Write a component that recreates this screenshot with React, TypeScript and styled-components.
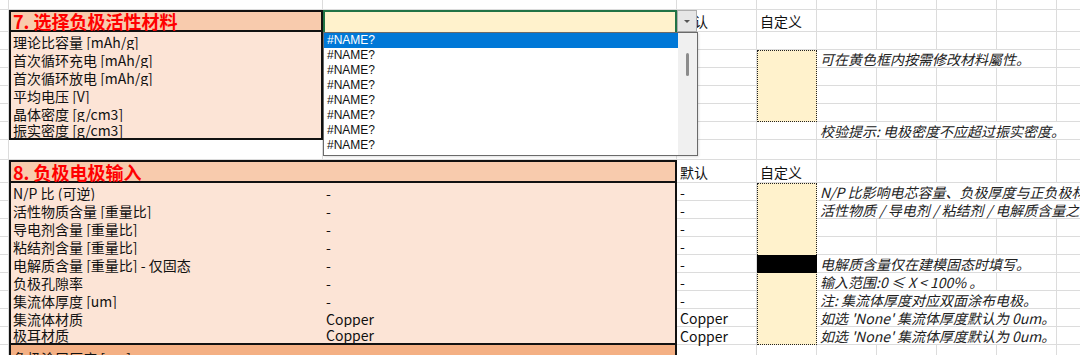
import React from 'react';
import styled, { createGlobalStyle, css } from 'styled-components';

const GlobalStyle = createGlobalStyle`
  html, body { margin: 0; padding: 0; background: #ffffff; overflow: hidden; }
  body { font-family: "Noto Sans CJK SC", "Noto Sans", sans-serif; }
  *, *::before, *::after { box-sizing: border-box; }
`;

const COLS = [9, 314, 354, 80, 60, 60, 60, 60, 60, 60];
const ROWS = [10, 22, 18, 18, 18, 18, 18, 18, 20, 23, 18, 18, 18, 18, 18, 18, 18, 18, 18, 26];

const GRID = '#dcdcdc';
const EDGE = '2px solid #111';

type Place = { $col: number; $row: number; $colSpan?: number; $rowSpan?: number };
type Edges = { $top?: boolean; $bottom?: boolean; $left?: boolean; $right?: boolean };

const place = css<Place>`
  grid-column: ${(p) => `${p.$col} / span ${p.$colSpan ?? 1}`};
  grid-row: ${(p) => `${p.$row} / span ${p.$rowSpan ?? 1}`};
`;

const edges = css<Edges>`
  border-top: ${(p) => (p.$top ? EDGE : 'none')};
  border-bottom: ${(p) => (p.$bottom ? EDGE : 'none')};
  border-left: ${(p) => (p.$left ? EDGE : 'none')};
  border-right: ${(p) => (p.$right ? EDGE : 'none')};
`;

const Sheet = styled.div`
  position: relative;
  display: grid;
  grid-template-columns: ${COLS.map((w) => `${w}px`).join(' ')};
  grid-template-rows: ${ROWS.map((h) => `${h}px`).join(' ')};
  width: 1080px;
  height: 355px;
  overflow: hidden;
  font-size: 14px;
  line-height: 15px;
  color: #111;
`;

const GridCell = styled.div<Place>`
  ${place};
  border-right: 1px solid ${GRID};
  border-bottom: 1px solid ${GRID};
  display: flex;
  align-items: center;
  padding: 2px 0 0 3px;
  white-space: nowrap;
`;

const NoteCell = styled(GridCell)`
  font-style: italic;
  color: #222;
  padding-left: 3px;
`;

const SectionHeader = styled.div<Place & Edges>`
  ${place};
  ${edges};
  background: #f8cbad;
  color: #ff0000;
  font-weight: 700;
  font-size: 18px;
  line-height: 18px;
  display: flex;
  align-items: center;
  padding-left: 2px;
  white-space: nowrap;
`;

const LabelCell = styled.div<Place & Edges>`
  ${place};
  ${edges};
  background: #fce4d6;
  display: flex;
  align-items: center;
  padding: ${(p) => (p.$bottom ? '0' : '2px')} 0 0 2px;
  white-space: nowrap;
`;

const ValueCell = styled(LabelCell)`
  padding-left: 3px;
`;

const FooterCell = styled.div<Place & Edges>`
  ${place};
  ${edges};
  background: #f4b084;
  padding: 6px 0 0 2px;
  white-space: nowrap;
`;

const SelectedCell = styled.div<Place>`
  ${place};
  background: #fff2cc;
  border: 2px solid #217346;
  border-bottom: none;
`;

const CustomBox = styled.div<Place>`
  ${place};
  background: #fff2cc;
  border: 1px dotted #222;
`;

const BlackCell = styled.div<Place>`
  ${place};
  background: #000;
`;

const DropButton = styled.div`
  position: absolute;
  left: 677px;
  top: 10px;
  width: 20px;
  height: 22px;
  background: #e6e6e6;
  border: 1px solid #adadad;
  display: flex;
  align-items: center;
  justify-content: center;
`;

const Caret = styled.span`
  width: 0;
  height: 0;
  border-left: 3px solid transparent;
  border-right: 3px solid transparent;
  border-top: 3px solid #555;
`;

const DropList = styled.div`
  position: absolute;
  left: 323px;
  top: 32px;
  width: 375px;
  height: 124px;
  background: #ffffff;
  border: 1px solid #6a6a6a;
  display: flex;
  box-shadow: 1px 1px 2px rgba(0, 0, 0, 0.12);
`;

const Options = styled.ul`
  flex: 1;
  margin: 0;
  padding: 0;
  list-style: none;
  overflow: hidden;
`;

const Option = styled.li<{ $active?: boolean }>`
  height: 15px;
  line-height: 15px;
  padding-left: 3px;
  font-family: "Liberation Sans", Arial, sans-serif;
  font-size: 12px;
  color: ${(p) => (p.$active ? '#ffffff' : '#111')};
  background: ${(p) => (p.$active ? '#0078d7' : 'transparent')};
`;

const ScrollTrack = styled.div`
  width: 19px;
  background: #f0f0f0;
  display: flex;
  justify-content: center;
`;

const ScrollThumb = styled.div`
  margin-top: 20px;
  width: 3px;
  height: 23px;
  border-radius: 2px;
  background: #8c8c8c;
`;

const sec7Labels = [
  '理论比容量 [mAh/g]',
  '首次循环充电 [mAh/g]',
  '首次循环放电 [mAh/g]',
  '平均电压 [V]',
  '晶体密度 [g/cm3]',
  '振实密度 [g/cm3]',
];

const sec8Rows = [
  { label: 'N/P 比 (可逆)', value: '-' },
  { label: '活性物质含量 [重量比]', value: '-' },
  { label: '导电剂含量 [重量比]', value: '-' },
  { label: '粘结剂含量 [重量比]', value: '-' },
  { label: '电解质含量 [重量比] - 仅固态', value: '-' },
  { label: '负极孔隙率', value: '-' },
  { label: '集流体厚度 [um]', value: '-' },
  { label: '集流体材质', value: 'Copper' },
  { label: '极耳材质', value: 'Copper' },
];

const notes = [
  { row: 4, span: 4, text: '可在黄色框内按需修改材料屬性。' },
  { row: 8, span: 5, text: '校验提示: 电极密度不应超过振实密度。' },
  { row: 11, span: 5, text: 'N/P 比影响电芯容量、负极厚度与正负极材料利用率。' },
  { row: 12, span: 5, text: '活性物质 / 导电剂 / 粘结剂 / 电解质含量之和应为 100%。' },
  { row: 15, span: 4, text: '电解质含量仅在建模固态时填写。' },
  { row: 16, span: 3, text: '输入范围:0 ≤ X < 100% 。' },
  { row: 17, span: 4, text: '注: 集流体厚度对应双面涂布电极。' },
  { row: 18, span: 4, text: "如选 'None' 集流体厚度默认为 0um。" },
  { row: 19, span: 4, text: "如选 'None' 集流体厚度默认为 0um。" },
];

type Area = { c: number; r: number; cs: number; rs: number };

export default function App() {
  const areas: Area[] = [
    { c: 2, r: 2, cs: 1, rs: 1 },
    { c: 3, r: 2, cs: 1, rs: 1 },
    { c: 4, r: 2, cs: 1, rs: 1 },
    { c: 5, r: 2, cs: 1, rs: 1 },
    { c: 2, r: 3, cs: 2, rs: 6 },
    { c: 5, r: 4, cs: 1, rs: 4 },
    { c: 2, r: 10, cs: 4, rs: 1 },
    { c: 2, r: 11, cs: 4, rs: 9 },
    { c: 2, r: 20, cs: 2, rs: 1 },
    ...notes.map((n) => ({ c: 6, r: n.row, cs: n.span, rs: 1 })),
  ];
  const taken = new Set<string>();
  areas.forEach((a) => {
    for (let c = a.c; c < a.c + a.cs; c++)
      for (let r = a.r; r < a.r + a.rs; r++) taken.add(`${c}-${r}`);
  });
  const blanks: { c: number; r: number }[] = [];
  for (let r = 1; r <= ROWS.length; r++)
    for (let c = 1; c <= COLS.length; c++) if (!taken.has(`${c}-${r}`)) blanks.push({ c, r });

  return (
    <>
      <GlobalStyle />
      <Sheet>
        {blanks.map((b) => (
          <GridCell key={`g${b.c}-${b.r}`} $col={b.c} $row={b.r} />
        ))}

        {/* Section 7 */}
        <SectionHeader $col={2} $row={2} $top $bottom $left $right>
          7. 选择负极活性材料
        </SectionHeader>
        <SelectedCell $col={3} $row={2} />
        <GridCell $col={4} $row={2}>默认</GridCell>
        <GridCell $col={5} $row={2}>自定义</GridCell>
        {sec7Labels.map((label, i) => (
          <React.Fragment key={label}>
            <LabelCell $col={2} $row={3 + i} $left $right $bottom={i === 5}>
              {label}
            </LabelCell>
            <ValueCell $col={3} $row={3 + i} $right $bottom={i === 5} />
          </React.Fragment>
        ))}
        <CustomBox $col={5} $row={4} $rowSpan={4} />

        {/* Section 8 */}
        <SectionHeader $col={2} $row={10} $colSpan={2} $top $bottom $left $right>
          8. 负极电极输入
        </SectionHeader>
        <GridCell $col={4} $row={10}>默认</GridCell>
        <GridCell $col={5} $row={10}>自定义</GridCell>
        {sec8Rows.map((row, i) => (
          <React.Fragment key={row.label}>
            <LabelCell $col={2} $row={11 + i} $left $bottom={i === 8}>
              {row.label}
            </LabelCell>
            <ValueCell $col={3} $row={11 + i} $right $bottom={i === 8}>
              {row.value}
            </ValueCell>
            <GridCell $col={4} $row={11 + i}>{row.value}</GridCell>
          </React.Fragment>
        ))}
        <CustomBox $col={5} $row={11} $rowSpan={9} />
        <BlackCell $col={5} $row={15} />
        <FooterCell $col={2} $row={20} $colSpan={2} $left $right>
          负极涂层厚度 [um]
        </FooterCell>

        {notes.map((n) => (
          <NoteCell key={`n${n.row}`} $col={6} $row={n.row} $colSpan={n.span}>
            {n.text}
          </NoteCell>
        ))}

        <DropButton>
          <Caret />
        </DropButton>
        <DropList>
          <Options>
            {Array.from({ length: 8 }).map((_, i) => (
              <Option key={i} $active={i === 0}>
                #NAME?
              </Option>
            ))}
          </Options>
          <ScrollTrack>
            <ScrollThumb />
          </ScrollTrack>
        </DropList>
      </Sheet>
    </>
  );
}
